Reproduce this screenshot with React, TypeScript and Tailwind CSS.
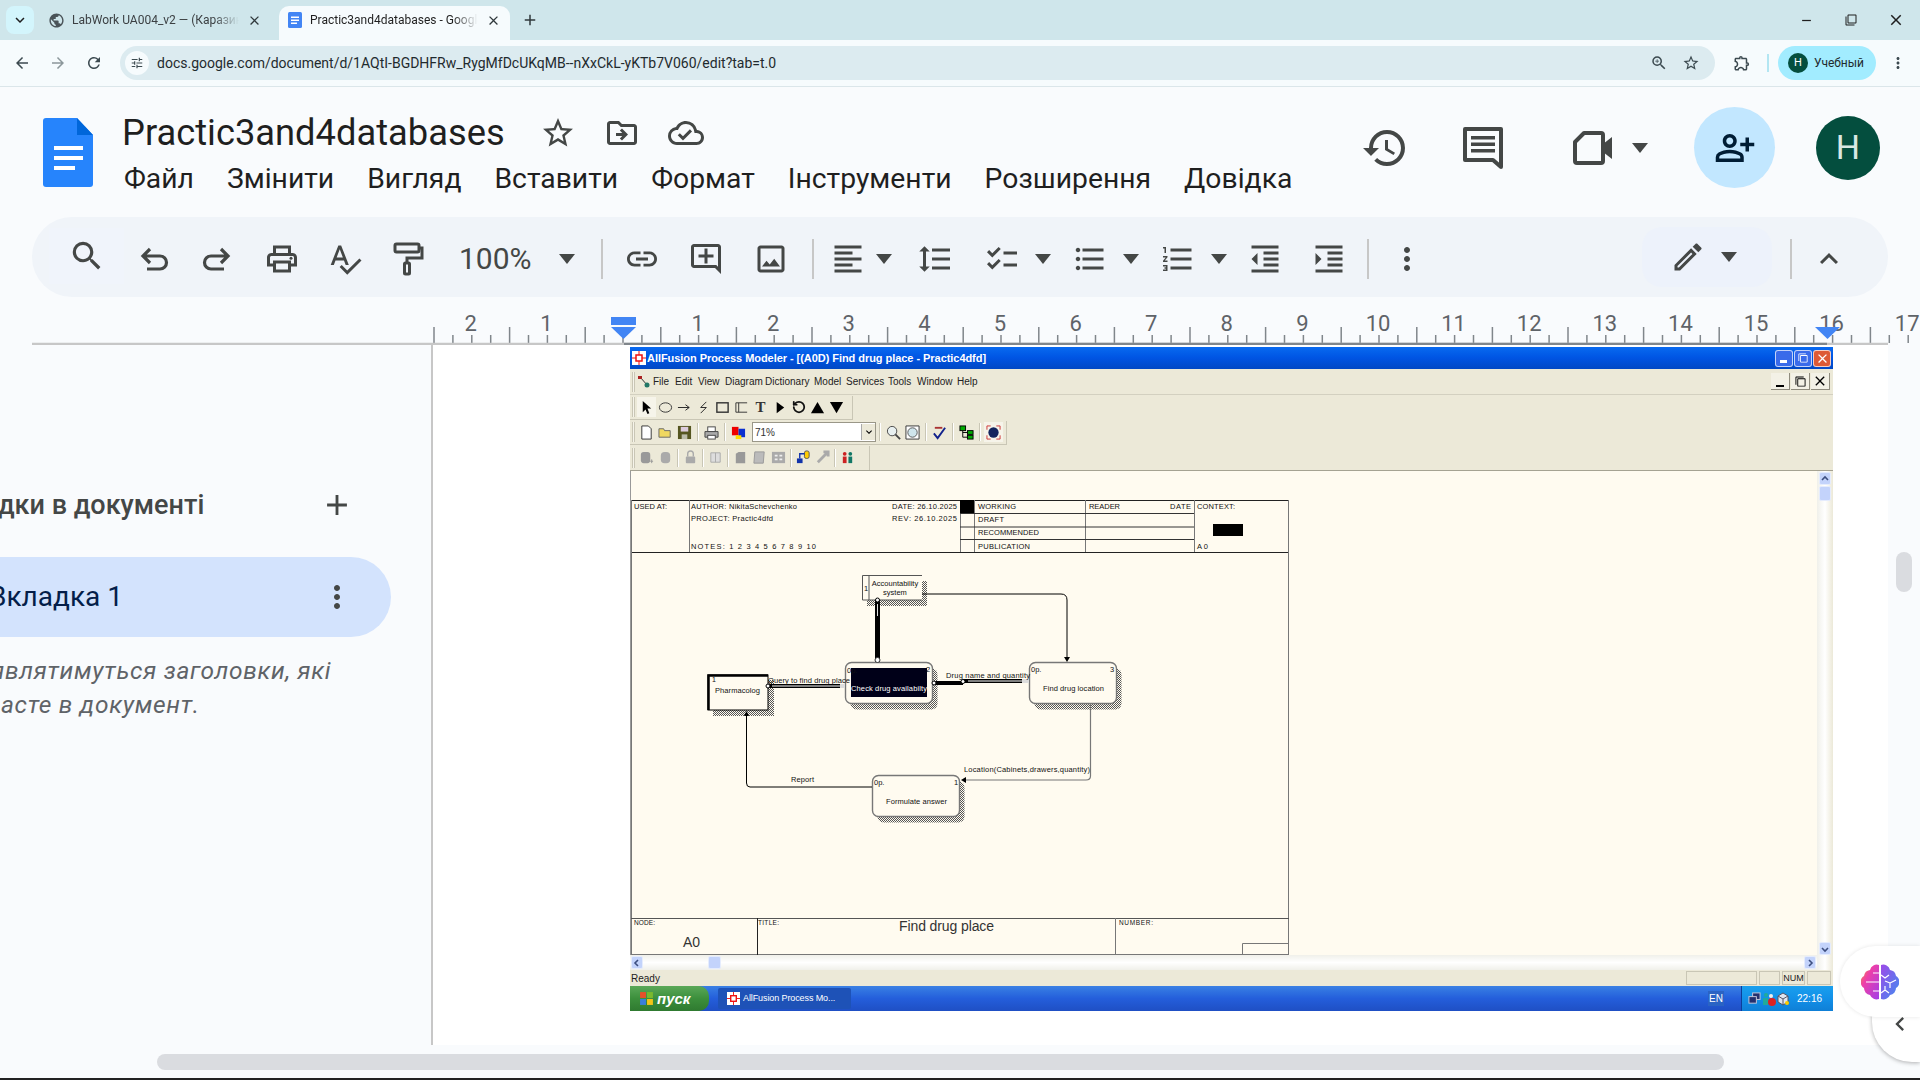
import React from "react";
import {
  MdSearch, MdOutlinePrint, MdSpellcheck, MdLink, MdOutlineAddComment, MdOutlineImage,
  MdFormatAlignLeft, MdFormatLineSpacing, MdChecklist, MdFormatListBulleted, MdFormatListNumbered, MdFormatIndentDecrease,
  MdFormatIndentIncrease, MdMoreVert, MdOutlineEdit, MdExpandLess, MdHistory, MdOutlinePersonAddAlt,
  MdStarBorder, MdOutlineDriveFileMove, MdOutlineCloudDone, MdArrowBack, MdArrowForward, MdRefresh, MdTune, MdZoomIn,
  MdOutlineExtension, MdClose, MdAdd, MdExpandMore, MdPublic, MdOutlineFilterNone, MdRemove, MdChevronLeft,
} from "react-icons/md";
import { RotateCcw } from "lucide-react";

const Caret = ({ className = "" }: { className?: string }) => (
  <svg viewBox="0 0 20 12" className={"w-5 h-3 shrink-0 " + className}><path d="M2 1h16l-8 10z" fill="#444746" /></svg>
);

const Ic = ({ className = "", children }: { className?: string; children: React.ReactNode }) => (
  <div className={"w-9 h-9 shrink-0 flex items-center justify-center text-[36px] text-[#444746] " + className}>{children}</div>
);

const Sep = ({ className = "" }: { className?: string }) => <div className={"w-[2px] h-10 shrink-0 bg-[#c7c7c7] " + className} />;

const UndoIcon = () => (
  <svg viewBox="0 0 36 36" className="w-9 h-9"><path d="M14 8 7 15l7 7M7 15h17a6.500 6.500 0 0 1 0 13H11" fill="none" stroke="#444746" strokeWidth="3.200" /></svg>
);
const RedoIcon = () => (
  <svg viewBox="0 0 36 36" className="w-9 h-9"><path d="M22 8l7 7-7 7M29 15H12a6.500 6.500 0 0 0 0 13h13" fill="none" stroke="#444746" strokeWidth="3.200" /></svg>
);
const RollerIcon = () => (
  <svg viewBox="0 0 36 36" className="w-9 h-9">
    <rect x="5" y="3" width="24" height="8" rx="1.500" fill="none" stroke="#444746" strokeWidth="3" />
    <path d="M29 7h3v10H17v5" fill="none" stroke="#444746" strokeWidth="3" />
    <rect x="14.500" y="22" width="5" height="11" rx="1" fill="none" stroke="#444746" strokeWidth="3" />
  </svg>
);

function DocsLogo() {
  return (
    <svg viewBox="0 0 50 69" className="w-[50px] h-[69px] shrink-0">
      <path d="M3 0h31l16 17v49a3 3 0 0 1-3 3H3a3 3 0 0 1-3-3V3a3 3 0 0 1 3-3z" fill="#2684fc" />
      <path d="M34 0l16 17H34z" fill="#0066da" />
      <path d="M11 28h29v4H11zM11 38h29v4H11zM11 48h21v4H11z" fill="#fff" />
    </svg>
  );
}

function DocsFav() {
  return (
    <svg viewBox="0 0 16 16" className="w-4 h-4 shrink-0">
      <rect x="1" y="0" width="14" height="16" rx="1.500" fill="#4285f4" />
      <path d="M4 4.500h8v1.600H4zM4 7.500h8v1.600H4zM4 10.500h6v1.600H4z" fill="#fff" />
    </svg>
  );
}

function TabStrip() {
  return (
    <div className="h-10 shrink-0 bg-[#cfe6eb] flex text-[12px] text-[#3c4043]">
      <div className="ml-[6px] mt-[6px] w-7 h-7 rounded-lg bg-[#d3f5fc] flex items-center justify-center text-[18px] text-[#1f1f1f]"><MdExpandMore /></div>
      <div className="w-[245px] flex items-center pl-[14px]">
        <MdPublic className="text-[17px] text-[#4a5358] shrink-0" />
        <span className="ml-[7px] w-[167px] overflow-hidden whitespace-nowrap [mask-image:linear-gradient(to_right,#000_85%,transparent)]">LabWork UA004_v2 — (Каразин Університет)</span>
        <MdClose className="ml-[8px] text-[15px] text-[#30393c] shrink-0" />
      </div>
      <div className="mt-[6px] w-[231px] h-[34px] rounded-t-[10px] bg-[#f6fbfd] flex items-center pl-[8px] pb-[6px] text-[#1f1f1f]">
        <DocsFav />
        <span className="ml-[7px] w-[168px] overflow-hidden whitespace-nowrap [mask-image:linear-gradient(to_right,#000_85%,transparent)]">Practic3and4databases - Google Docs</span>
        <MdClose className="ml-[8px] text-[15px] text-[#30393c] shrink-0" />
      </div>
      <div className="ml-[11px] flex items-center"><MdAdd className="text-[18px] text-[#30393c]" /></div>
      <div className="ml-auto flex items-center text-[#1f1f1f]">
        <MdRemove className="text-[15px]" />
        <MdOutlineFilterNone className="ml-[31px] text-[12px]" />
        <MdClose className="ml-[30px] mr-[15px] text-[18px]" />
      </div>
    </div>
  );
}

function AddressBar() {
  return (
    <div className="h-[47px] shrink-0 bg-[#f6fbfd] border-b border-[#dbe6ea] flex items-center text-[#3c4a50]">
      <MdArrowBack className="ml-[13px] text-[18px] shrink-0" />
      <MdArrowForward className="ml-[18px] text-[18px] text-[#8c979b] shrink-0" />
      <MdRefresh className="ml-[18px] text-[18px] shrink-0" />
      <div className="ml-[17px] w-[1595px] h-[34px] rounded-full bg-[#dcebf0] flex items-center shrink-0">
        <div className="ml-[5px] w-6 h-6 rounded-full bg-[#f6fbfd] flex items-center justify-center text-[14px]"><MdTune /></div>
        <span className="ml-[8px] text-[14px] text-[#1f2a2e] font-['Roboto',sans-serif] whitespace-nowrap">docs.google.com/document/d/1AQtI-BGDHFRw_RygMfDcUKqMB--nXxCkL-yKTb7V060/edit?tab=t.0</span>
        <MdZoomIn className="ml-auto text-[18px]" />
        <MdStarBorder className="ml-[14px] mr-[15px] text-[18px]" />
      </div>
      <MdOutlineExtension className="ml-[18px] text-[18px] shrink-0" />
      <div className="ml-[16px] w-[2px] h-[18px] bg-[#b3e6f2] shrink-0" />
      <div className="ml-[9px] w-[98px] h-[34px] rounded-full bg-[#a2ecff] flex items-center pl-[10px] shrink-0">
        <div className="w-5 h-5 rounded-full bg-[#044e3e] text-white text-[11px] flex items-center justify-center">H</div>
        <span className="ml-[6px] text-[12px] text-[#1f2a2e]">Учебный</span>
      </div>
      <MdMoreVert className="ml-[13px] text-[18px] shrink-0" />
    </div>
  );
}

function DocHeader() {
  return (
    <div className="h-[130px] shrink-0 flex items-start">
      <div className="ml-[43px] mt-[31px]"><DocsLogo /></div>
      <div className="ml-[29px] mt-[25px]">
        <div className="flex items-center h-[42px]">
          <div className="w-[385px] text-[36.300px] leading-[42px] text-[#1f1f1f] whitespace-nowrap">Practic3and4databases</div>
          <Ic className="ml-[33px]"><MdStarBorder /></Ic>
          <Ic className="ml-[28px]"><MdOutlineDriveFileMove /></Ic>
          <Ic className="ml-[28px]"><MdOutlineCloudDone /></Ic>
        </div>
        <div className="flex ml-[2px] mt-[6px] gap-[33px] text-[28.300px] leading-[38px] text-[#1f1f1f] whitespace-nowrap">
          <span>Файл</span><span>Змінити</span><span>Вигляд</span><span>Вставити</span><span>Формат</span><span>Інструменти</span><span>Розширення</span><span>Довідка</span>
        </div>
      </div>
      <div className="ml-auto mt-[20px] h-[81px] flex items-center pr-[40px]">
        <Ic className="w-12 h-12 text-[50px]"><MdHistory /></Ic>
        <svg viewBox="0 0 40 42" className="ml-[54px] w-[40px] h-[42px] shrink-0">
          <path d="M2 2h36v38l-8-7H2z" fill="none" stroke="#444746" strokeWidth="4" strokeLinejoin="round" />
          <path d="M8 9h24v3.500H8zM8 15.500h24V19H8zM8 22h24v3.500H8z" fill="#444746" />
        </svg>
        <svg viewBox="0 0 42 34" className="ml-[69px] w-[42px] h-[34px] shrink-0">
          <path d="M12 2h17a2 2 0 0 1 2 2v26a2 2 0 0 1-2 2H5a2 2 0 0 1-2-2V11z" fill="none" stroke="#444746" strokeWidth="4" strokeLinejoin="round" />
          <path d="M31 13l9-7v22l-9-7z" fill="#444746" />
        </svg>
        <Caret className="ml-[16px]" />
        <div className="ml-[44px] w-[81px] h-[81px] rounded-full bg-[#c2e7ff] flex items-center justify-center text-[42px] text-[#001d35] shrink-0"><MdOutlinePersonAddAlt /></div>
        <div className="ml-[41px] w-16 h-16 rounded-full bg-[#044e3e] text-[#d8e8e3] text-[34px] flex items-center justify-center shrink-0">H</div>
      </div>
    </div>
  );
}

function Toolbar() {
  return (
    <div className="h-20 shrink-0 ml-[32px] w-[1856px] rounded-full bg-[#f0f4f9] flex items-center pt-[3px]">
      <div className="ml-[17px] w-[75px] h-14 bg-[#f0f4fb] flex items-center justify-center text-[38px] text-[#444746] -mt-[6px]"><MdSearch /></div>
      <Ic className="ml-[12px]"><UndoIcon /></Ic>
      <Ic className="ml-[27px]"><RedoIcon /></Ic>
      <Ic className="ml-[29px]"><MdOutlinePrint /></Ic>
      <Ic className="ml-[27px]"><MdSpellcheck /></Ic>
      <Ic className="ml-[27px]"><RollerIcon /></Ic>
      <div className="ml-[33px] w-[73px] text-[30px] text-[#444746] whitespace-nowrap">100%</div>
      <Caret className="ml-[25px]" />
      <Sep className="ml-[24px]" />
      <Ic className="ml-[21px]"><MdLink /></Ic>
      <Ic className="ml-[28px]"><MdOutlineAddComment /></Ic>
      <Ic className="ml-[29px]"><MdOutlineImage /></Ic>
      <Sep className="ml-[23px]" />
      <Ic className="ml-[16px]"><MdFormatAlignLeft /></Ic>
      <Caret className="ml-[8px]" />
      <Ic className="ml-[23px]"><MdFormatLineSpacing /></Ic>
      <Ic className="ml-[31px]"><MdChecklist /></Ic>
      <Caret className="ml-[13px]" />
      <Ic className="ml-[19px]"><MdFormatListBulleted /></Ic>
      <Caret className="ml-[13px]" />
      <Ic className="ml-[19px]"><MdFormatListNumbered /></Ic>
      <Caret className="ml-[13px]" />
      <Ic className="ml-[18px]"><MdFormatIndentDecrease /></Ic>
      <Ic className="ml-[28px]"><MdFormatIndentIncrease /></Ic>
      <Sep className="ml-[20px]" />
      <Ic className="ml-[20px]"><MdMoreVert /></Ic>
      <div className="ml-[217px] w-[130px] h-[60px] rounded-[20px] bg-[#edf2fb] flex items-center shrink-0 -mt-[3px]">
        <Ic className="ml-[28px]"><MdOutlineEdit /></Ic>
        <Caret className="ml-[13px]" />
      </div>
      <Sep className="ml-[18px]" />
      <Ic className="ml-[19px]"><MdExpandLess /></Ic>
    </div>
  );
}

function Ruler() {
  const ticks = [];
  for (let i = -10; i <= 68; i++) {
    const x = 623 + i * 18.9;
    const half = ((i % 4) + 4) % 4 === 2;
    ticks.push(<path key={i} d={`M${x} ${half ? 327 : 335}V343`} stroke="#80868b" strokeWidth="1.500" />);
  }
  const nums = [-2, -1, 1, 2, 3, 4, 5, 6, 7, 8, 9, 10, 11, 12, 13, 14, 15, 16, 17];
  return (
    <svg viewBox="0 297 1920 48" className="w-[1920px] h-12 shrink-0 block">
      {ticks}
      {nums.map((n) => (
        <text key={n} x={622 + n * 75.6} y={331} textAnchor="middle" fontSize="22" fontFamily="Roboto, sans-serif" fill="#5f6368">{Math.abs(n)}</text>
      ))}
      <path d="M32 344H1888" stroke="#c7c7c7" strokeWidth="2.500" />
      <path d="M624 344H1827" stroke="#80868b" strokeWidth="2.500" />
      <rect x="611" y="317" width="25" height="8" fill="#4285f4" />
      <path d="M611 327h25l-12.500 12z" fill="#4285f4" />
      <path d="M1815 327h25l-12.500 12z" fill="#4285f4" />
    </svg>
  );
}

function Sidebar() {
  return (
    <div className="w-[433px] shrink-0 border-r-2 border-[#c7c7c7] overflow-hidden">
      <div className="mt-[140px] h-10 flex items-center">
        <span className="-ml-[64px] w-[385px] text-[27px] font-medium text-[#444746] whitespace-nowrap shrink-0">Вкладки в документі</span>
        <MdAdd className="text-[34px] text-[#444746] -ml-[1px] shrink-0" />
      </div>
      <div className="mt-[32px] w-[391px] h-20 rounded-r-full bg-[#d3e3fd] flex items-center">
        <span className="-ml-[11px] w-[330px] text-[28px] text-[#041e49] whitespace-nowrap shrink-0">Вкладка 1</span>
        <MdMoreVert className="text-[36px] text-[#444746] shrink-0" />
      </div>
      <div className="mt-[17px] text-[24.500px] leading-[34px] italic text-[#5f6368] whitespace-nowrap tracking-[0.7px]">
        <div className="-ml-[71px]">Тут з'являтимуться заголовки, які</div>
        <div className="-ml-[78px]">ви додасте в документ.</div>
      </div>
    </div>
  );
}

function Grip() {
  return <div className="ml-[2px] mr-[2px] w-[3px] h-[20px] border-x border-[#c9c6b5] bg-[#f6f4ea] shrink-0" />;
}

const XI = ({ children, className = "" }: { children: React.ReactNode; className?: string }) => (
  <div className={"w-[19px] h-[20px] shrink-0 flex items-center justify-center " + className}>
    <svg viewBox="0 0 16 16" className="w-[15px] h-[15px]">{children}</svg>
  </div>
);
const XSep = ({ className = "mx-[3px]" }: { className?: string }) => <div className={"w-[2px] h-[18px] border-x border-l-[#c9c6b5] border-r-white shrink-0 " + className} />;

function XpBtn({ kind, color }: { kind: string; color: string }) {
  return (
    <div className={"w-[18px] h-[17px] rounded-[3px] border border-white/70 flex items-center justify-center shrink-0 " + color}>
      {kind === "min" && <div className="w-[7px] h-[3px] bg-white mt-[7px] -ml-[2px]" />}
      {kind === "max" && <MdOutlineFilterNone className="text-white text-[10px] rotate-90" />}
      {kind === "x" && <MdClose className="text-white text-[15px]" />}
    </div>
  );
}

function MdiBtn({ children }: { children: React.ReactNode }) {
  return <div className="w-[19px] h-[17px] bg-[#f3f1e6] border-r border-b border-[#8f8c7e] flex items-center justify-center text-black shrink-0">{children}</div>;
}

function Sheet() {
  const t = (x: number, y: number, s: string, len?: number, size = 7.5, fill = "#111") => (
    <text x={x} y={y} fontSize={size} fontFamily="'Liberation Sans', sans-serif" fill={fill} textLength={len} lengthAdjust={len ? "spacing" : undefined}>{s}</text>
  );
  const box = (x: number, y: number, w: number, h: number, r: number, stroke = "#777", sw = 1.4) => (
    <>
      <rect x={x + 5} y={y + 6} width={w} height={h} rx={r} fill="url(#hatch)" />
      <rect x={x} y={y} width={w} height={h} rx={r} fill="#fffbf0" stroke={stroke} strokeWidth={sw} />
    </>
  );
  return (
    <svg viewBox="630 471 1187 484" className="w-full h-full block">
      <defs>
        <pattern id="hatch" width="2" height="2" patternUnits="userSpaceOnUse">
          <rect width="2" height="2" fill="#fffbf0" />
          <rect width="1" height="1" fill="#555" />
          <rect x="1" y="1" width="1" height="1" fill="#555" />
        </pattern>
      </defs>
      <rect x="630" y="470" width="1187" height="486" fill="#fffbf0" />
      <path d="M630.500 471V955" stroke="#999" />
      {/* frame */}
      <rect x="631.500" y="500.500" width="657" height="454" fill="none" stroke="#777" />
      <path d="M632 500.500H1288M632 552.500H1288" stroke="#222" />
      <path d="M689.500 500V552M974.500 500V552M1085.500 500V552M1194.500 500V552M960.500 500V552" stroke="#777" />
      <path d="M960 513.500H1194M960 527H1194M960 539.500H1194" stroke="#333" />
      <rect x="960" y="500" width="14" height="13" fill="#000" />
      <rect x="1213" y="524" width="30" height="12" fill="#000" />
      {t(634, 509, "USED AT:", 33)}
      {t(691, 509, "AUTHOR:  NikitaSchevchenko", 106)}
      {t(691, 521, "PROJECT:  Practic4dfd", 82)}
      {t(691, 549, "NOTES:  1  2  3  4  5  6  7  8  9  10", 125)}
      {t(892, 509, "DATE:  26.10.2025", 65)}
      {t(892, 521, "REV:   26.10.2025", 65)}
      {t(978, 509, "WORKING", 38)}
      {t(978, 522, "DRAFT", 26)}
      {t(978, 535, "RECOMMENDED", 61)}
      {t(978, 549, "PUBLICATION", 52)}
      {t(1089, 509, "READER", 31)}
      {t(1170, 509, "DATE", 21)}
      {t(1197, 509, "CONTEXT:", 38)}
      {t(1197, 549, "A0", 11)}
      {/* bottom table */}
      <path d="M631 918.500H1289" stroke="#555" />
      <path d="M757.500 918V955" stroke="#222" />
      <path d="M1115.500 918V955M1242.500 955V943.500H1289" stroke="#777" fill="none" />
      {t(634, 925, "NODE:", 21, 6.5)}
      {t(758, 925, "TITLE:", 21, 6.5)}
      {t(1119, 925, "NUMBER:", 34, 6.5)}
      <text x="899" y="931" fontSize="14" fontFamily="'Liberation Sans', sans-serif" fill="#333" textLength="95">Find drug place</text>
      <text x="683" y="947" fontSize="14" fontFamily="'Liberation Sans', sans-serif" fill="#333" textLength="17">A0</text>
      {/* store */}
      <rect x="867" y="581" width="60" height="25" fill="url(#hatch)" />
      <rect x="862" y="575" width="60" height="25" fill="#fffbf0" />
      <path d="M922 575.500H862.500V600H922M869 575V600" stroke="#555" fill="none" />
      {t(864, 591, "1", undefined, 7.500)}
      <text x="895" y="586" textAnchor="middle" fontSize="7.500" fontFamily="'Liberation Sans', sans-serif" fill="#111">Accountability</text>
      <text x="895" y="595" textAnchor="middle" fontSize="7.500" fontFamily="'Liberation Sans', sans-serif" fill="#111">system</text>
      {/* pharmacolog */}
      <rect x="713" y="680" width="61" height="36" fill="url(#hatch)" />
      <rect x="708" y="675" width="60" height="35" fill="#fffbf0" stroke="#000" strokeWidth="1" />
      <path d="M708.500 710V675.500H768" stroke="#000" strokeWidth="2.500" fill="none" />
      {t(712, 682, "1", undefined, 7)}
      {t(715, 693, "Pharmacolog", 45)}
      {/* processes */}
      {box(845.500, 662.500, 87, 41, 6)}
      <rect x="851" y="668" width="76" height="29" fill="#000018" />
      {t(847, 673, "0p.", undefined, 7.500)}
      {t(926, 672, "2", undefined, 7.500)}
      {t(851, 691, "Check drug availabilty", 76, 7.500, "#fff")}
      {box(1029.500, 662.500, 87, 41, 6)}
      {t(1031, 672, "0p.", undefined, 7.500)}
      {t(1110, 672, "3", undefined, 7.500)}
      {t(1043, 691, "Find drug location", 61)}
      {box(872.500, 775.500, 87, 41, 6)}
      {t(874, 785, "0p.", undefined, 7.500)}
      {t(954, 785, "1", undefined, 7.500)}
      {t(886, 804, "Formulate answer", 61)}
      {/* arrows */}
      <path d="M877.500 600V660" stroke="#000" strokeWidth="5" />
      <path d="M877.500 604V616" stroke="#ddd" strokeWidth="1" />
      <circle cx="877.500" cy="600" r="2" fill="#fff" stroke="#000" />
      <circle cx="877.500" cy="660" r="2.500" fill="#fff" stroke="#333" />
      <path d="M922 594H1061Q1067 594 1067 600V657" stroke="#000" strokeWidth="1" fill="none" />
      <path d="M1064 657h6l-3 5z" fill="#000" />
      <path d="M768 686H845" stroke="#000" strokeWidth="4" />
      <path d="M772 686H845" stroke="#fff" strokeWidth="1" />
      <circle cx="768" cy="686" r="2" fill="#fff" stroke="#000" />
      <path d="M840 686H845" stroke="#ddd" strokeWidth="4" />
      {t(768, 683, "Query to find drug place", 82, 7.500)}
      <path d="M933 683H963" stroke="#000" strokeWidth="4" />
      <path d="M963 681H1029" stroke="#000" strokeWidth="4" />
      <path d="M968 681H1022" stroke="#fff" strokeWidth="1" />
      <circle cx="963" cy="681.500" r="2" fill="#fff" stroke="#000" />
      <circle cx="934" cy="683" r="2" fill="#fff" stroke="#000" />
      <path d="M1022 681H1029" stroke="#ddd" strokeWidth="4" />
      {t(946, 678, "Drug name and quantity", 84, 7.500)}
      <path d="M1090.500 703V776Q1090.500 780 1086 780H965" stroke="#777" strokeWidth="1.200" fill="none" />
      <path d="M966 777v6l-5-3z" fill="#000" />
      {t(964, 772, "Location(Cabinets,drawers,quantity)", 126, 7.500)}
      <path d="M872 787H750Q746.500 787 746.500 783V715" stroke="#000" strokeWidth="1" fill="none" />
      <path d="M744 716h5l-2.500-5z" fill="#000" />
      {t(791, 782, "Report", 23, 7.500)}
    </svg>
  );
}

function Scroll({ dir, className = "" }: { dir: string; className?: string }) {
  return (
    <div className={"w-[12px] h-[13px] rounded-[2px] bg-[#c3d3fb] border border-[#e5ecfd] shrink-0 flex items-center justify-center " + className}>
      <svg viewBox="0 0 8 8" className="w-2 h-2">
        <path d={dir === "up" ? "M1 5l3-3 3 3" : dir === "down" ? "M1 3l3 3 3-3" : dir === "left" ? "M5 1L2 4l3 3" : "M3 1l3 3-3 3"} fill="none" stroke="#3d4f80" strokeWidth="1.600" />
      </svg>
    </div>
  );
}

function XpWindow() {
  return (
    <div className="ml-[197px] mt-[2px] w-[1203px] h-[664px] flex flex-col bg-[#ece9d8] font-['Liberation_Sans',sans-serif]">
      <div className="h-[22px] shrink-0 bg-linear-to-b from-[#0a6af0] via-[#0054e3] to-[#0148c4] flex items-center">
        <svg viewBox="0 0 14 14" className="ml-[2px] w-[14px] h-[14px] bg-white shrink-0">
          <rect x="4" y="4" width="6" height="6" fill="none" stroke="#e11" strokeWidth="1.500" />
          <path d="M0 7h4M10 7h4M7 0v4M7 10v4" stroke="#e11" />
        </svg>
        <span className="ml-[1px] text-[11px] font-bold text-white whitespace-nowrap tracking-[-0.05px]">AllFusion Process Modeler - [(A0D) Find drug place - Practic4dfd]</span>
        <div className="ml-auto flex gap-[1px] pr-[2px]">
          <XpBtn kind="min" color="bg-[#3a6bea]" />
          <XpBtn kind="max" color="bg-[#3a6bea]" />
          <XpBtn kind="x" color="bg-[#dd5a36]" />
        </div>
      </div>
      <div className="h-[26px] shrink-0 flex items-center border-b border-[#d3d0c0] text-[10px] text-[#222]">
        <Grip />
        <svg viewBox="0 0 14 14" className="w-[14px] h-[14px] shrink-0"><path d="M3 2l8 9" stroke="#333" /><rect x="1" y="1" width="4" height="3" fill="#a22" /><circle cx="10" cy="10" r="2.500" fill="#276" /></svg>
        <div className="flex ml-[2px] whitespace-nowrap">
          <span className="w-[22px]">File</span><span className="w-[23px]">Edit</span><span className="w-[27px]">View</span><span className="w-[40px]">Diagram</span><span className="w-[49px]">Dictionary</span><span className="w-[32px]">Model</span><span className="w-[42px]">Services</span><span className="w-[29px]">Tools</span><span className="w-[40px]">Window</span><span>Help</span>
        </div>
        <div className="ml-auto flex gap-[1px] pr-[3px]">
          <MdiBtn><div className="w-2 h-[2px] bg-black mt-[9px]" /></MdiBtn>
          <MdiBtn><MdOutlineFilterNone className="text-[11px] rotate-90" /></MdiBtn>
          <MdiBtn><MdClose className="text-[16px]" /></MdiBtn>
        </div>
      </div>
      <div className="h-[25px] shrink-0 flex items-center">
        <div className="w-[223px] h-[24px] flex items-center border-r border-b border-[#c9c6b5]">
          <Grip />
          <XI className="bg-[#f6f4ea]"><path d="M4 1v12l3-3 2 5 2-1-2-5h4z" fill="#000" /></XI>
          <XI><ellipse cx="8" cy="8" rx="6.500" ry="5" fill="none" stroke="#333" /></XI>
          <XI><path d="M1 8h12M9 5l4 3-4 3" stroke="#222" fill="none" /></XI>
          <XI><path d="M11 2 5 8h6l-6 6" stroke="#222" fill="none" /></XI>
          <XI><rect x="2" y="3" width="12" height="10" fill="none" stroke="#333" strokeWidth="1.500" /></XI>
          <XI><path d="M14 3H2v10h12M5 3v10" stroke="#333" fill="none" /></XI>
          <div className="w-[19px] text-center font-['Liberation_Serif',serif] font-bold text-[15px] text-[#333] shrink-0">T</div>
          <XI><path d="M5 2l8 6-8 6z" fill="#000" /></XI>
          <div className="w-[19px] flex justify-center shrink-0"><RotateCcw size={14} strokeWidth={3} color="#111" /></div>
          <XI><path d="M8 2l7 12H1z" fill="#000" /></XI>
          <XI><path d="M8 14l7-12H1z" fill="#000" /></XI>
        </div>
      </div>
      <div className="h-[25px] shrink-0 flex items-center">
        <div className="w-[377px] h-[24px] flex items-center border-r border-b border-[#c9c6b5]">
          <Grip />
          <XI><path d="M3 1h7l3 3v11H3z" fill="#fff" stroke="#333" /></XI>
          <XI><path d="M1 13V4h5l1 2h6v7z" fill="#f0d860" stroke="#666" /></XI>
          <XI><path d="M1 1h14v14H1z" fill="#555520" /><rect x="4" y="2" width="8" height="5" fill="#dcd" /><rect x="5" y="10" width="6" height="5" fill="#bba" /></XI>
          <XSep />
          <XI><path d="M1 7h14v6H1z" fill="#aaa" stroke="#444" /><rect x="4" y="2" width="8" height="5" fill="#fff" stroke="#444" /><rect x="4" y="11" width="8" height="4" fill="#fff" stroke="#444" /></XI>
          <XSep />
          <XI><rect x="1" y="2" width="7" height="9" fill="#e00" /><rect x="8" y="4" width="7" height="9" fill="#0a2fd0" /><rect x="5" y="11" width="6" height="4" fill="#fd0" /></XI>
          <div className="ml-[4px] w-[124px] h-[20px] bg-white border border-[#9a9788] flex items-center shrink-0">
            <span className="ml-[2px] text-[10px] text-[#333]">71%</span>
            <div className="ml-auto w-[14px] h-[16px] bg-[#ece9d8] border-l border-[#aaa] flex items-center justify-center"><MdExpandMore className="text-[12px]" /></div>
          </div>
          <XSep />
          <XI><circle cx="6.500" cy="6.500" r="5" fill="#e8f0f0" stroke="#444" /><path d="M10 10l5 5" stroke="#444" strokeWidth="2" /></XI>
          <XI><path d="M1 1h14v14H1z" fill="#fff" stroke="#333" /><circle cx="8" cy="8" r="5" fill="#cfe5ec" stroke="#555" /></XI>
          <XSep />
          <XI><path d="M2 9l4 5 8-11" stroke="#12228c" strokeWidth="2" fill="none" /><path d="M3 3h8" stroke="#a33" strokeWidth="2" /></XI>
          <XSep />
          <XI><rect x="1" y="1" width="6" height="5" fill="#0a0" stroke="#000" /><rect x="9" y="6" width="6" height="4" fill="#0a0" stroke="#000" /><rect x="9" y="11" width="6" height="4" fill="#0a0" stroke="#000" /><path d="M4 6v7h5M4 8h5" stroke="#000" fill="none" /></XI>
          <XSep />
          <XI className="bg-[#f6f4ea]"><circle cx="8" cy="8" r="5.500" fill="#14245e" /><path d="M1 5V1h4M11 1h4v4M15 11v4h-4M5 15H1v-4" stroke="#c33" fill="none" /></XI>
        </div>
      </div>
      <div className="h-[25px] shrink-0 flex items-center">
        <div className="w-[240px] h-[24px] flex items-center border-r border-[#c9c6b5]">
          <Grip />
          <XI><rect x="2" y="2" width="10" height="12" rx="3" fill="#999" /><path d="M12 12h3M13.500 10v4" stroke="#999" /></XI>
          <XI><rect x="3" y="2" width="10" height="12" rx="4" fill="#aaa" /></XI>
          <XSep className="mx-[2px]" />
          <XI><rect x="3" y="7" width="10" height="7" rx="1" fill="#aaa" /><path d="M5 7V4a3 3 0 0 1 6 0v3" stroke="#aaa" fill="none" strokeWidth="1.500" /></XI>
          <XSep className="mx-[2px]" />
          <XI><path d="M3 3h10v10H3z" fill="#ddd" stroke="#aaa" /><path d="M8 3v10" stroke="#aaa" /></XI>
          <XSep className="mx-[2px]" />
          <XI><path d="M3 14V4l3-2h7v12z" fill="#999" /></XI>
          <XI><path d="M3 2h10l-1 12H2z" fill="#bbb" stroke="#999" /></XI>
          <XI><rect x="1" y="2" width="14" height="12" fill="#aaa" /><path d="M4 5h3v2H4zM9 5h3v2H9zM4 9h3v2H4zM9 9h3v2H9z" fill="#eee" /></XI>
          <XSep className="mx-[2px]" />
          <XI><rect x="1" y="9" width="6" height="5" fill="#13a" /><rect x="9" y="1" width="5" height="8" rx="2" fill="#fc0" stroke="#555" /><path d="M4 9V4h5" stroke="#13a" fill="none" strokeWidth="1.500" /></XI>
          <XI><path d="M3 13 13 3M9 2h5v5" stroke="#aaa" strokeWidth="3" fill="none" /></XI>
          <XSep className="mx-[2px]" />
          <XI><circle cx="5" cy="4" r="2" fill="#c22" /><circle cx="11" cy="4" r="2" fill="#176" /><path d="M3 7h4v7H3z" fill="#c22" /><path d="M9 7h4v7H9z" fill="#176" /></XI>
        </div>
      </div>
      <div className="flex-1 min-h-0 flex border-t border-[#a5a292]">
        <div className="flex-1 flex flex-col min-w-0">
          <div className="flex-1 min-h-0 overflow-hidden"><Sheet /></div>
          <div className="h-[15px] shrink-0 bg-linear-to-b from-[#f0f0ea] via-white to-[#f0f0ea] flex items-center pl-[1px]">
            <Scroll dir="left" />
            <div className="ml-[65px] w-[13px] h-[13px] rounded-[2px] bg-[#c3d3fb] border border-[#e5ecfd]" />
            <Scroll dir="right" className="ml-auto mr-[1px]" />
          </div>
        </div>
        <div className="w-[16px] shrink-0 bg-linear-to-r from-[#f0f0ea] via-white to-[#ece9d8] flex flex-col items-center pt-[1px] pb-[15px]">
          <Scroll dir="up" />
          <div className="mt-[1px] w-[12px] h-[15px] rounded-[2px] bg-[#c3d3fb] border border-[#e5ecfd]" />
          <Scroll dir="down" className="mt-auto" />
        </div>
      </div>
      <div className="h-[16px] shrink-0 flex items-center text-[10px] text-[#222]">
        <span className="ml-[1px]">Ready</span>
        <div className="ml-auto flex gap-[2px] pr-[2px] h-[14px]">
          <div className="w-[71px] border border-[#c9c6b5]" />
          <div className="w-[21px] border border-[#c9c6b5]" />
          <div className="w-[23px] border border-[#c9c6b5] text-center leading-[13px] text-[9px]">NUM</div>
          <div className="w-[24px] border border-[#c9c6b5]" />
        </div>
      </div>
      <div className="h-[25px] shrink-0 bg-linear-to-b from-[#3a80e4] via-[#245edb] to-[#1f4fc4] flex items-center text-white">
        <div className="w-[79px] h-full rounded-r-[10px] bg-linear-to-b from-[#5aa858] via-[#3c8f3c] to-[#2f7a30] flex items-center pl-[9px]">
          <svg viewBox="0 0 14 14" className="w-[15px] h-[15px] shrink-0">
            <rect x="1" y="1" width="5.500" height="5.500" fill="#e8502a" /><rect x="7.500" y="1" width="5.500" height="5.500" fill="#7ab92e" />
            <rect x="1" y="7.500" width="5.500" height="5.500" fill="#3a7fdc" /><rect x="7.500" y="7.500" width="5.500" height="5.500" fill="#f5c518" />
          </svg>
          <span className="ml-[3px] text-[15px] font-bold italic leading-none">пуск</span>
        </div>
        <div className="ml-[9px] w-[133px] h-[21px] rounded-[2px] bg-[#1e52b7] flex items-center pl-[9px]">
          <svg viewBox="0 0 14 14" className="w-[13px] h-[13px] bg-white shrink-0">
            <rect x="4" y="4" width="6" height="6" fill="none" stroke="#e11" strokeWidth="1.500" />
            <path d="M0 7h4M10 7h4M7 0v4M7 10v4" stroke="#e11" />
          </svg>
          <span className="ml-[3px] text-[9px] whitespace-nowrap tracking-[-0.1px]">AllFusion Process Mo...</span>
        </div>
        <span className="ml-auto mr-[17px] text-[10px] px-[1px] bg-[#2a63c4]">EN</span>
        <div className="w-[92px] h-full bg-linear-to-b from-[#1a9fee] via-[#1290e8] to-[#0f7fd6] border-l border-[#0c3f9a] flex items-center pl-[6px]">
          <svg viewBox="0 0 14 14" className="w-[13px] h-[13px] shrink-0"><rect x="5" y="1" width="8" height="7" fill="#24306e" stroke="#ccd" /><rect x="1" y="5" width="8" height="7" fill="#24306e" stroke="#ccd" /></svg>
          <svg viewBox="0 0 14 14" className="ml-[1px] w-[14px] h-[14px] shrink-0"><circle cx="4" cy="3" r="2" fill="#2a9" /><circle cx="9" cy="4" r="2" fill="#eee" /><circle cx="10" cy="10" r="4" fill="#d22" /><rect x="1" y="6" width="5" height="7" fill="#2a9" /></svg>
          <svg viewBox="0 0 14 14" className="ml-[0px] w-[14px] h-[14px] shrink-0"><path d="M7 1l5 3v6l-5 3-5-3V4z" fill="#dfe4ef" stroke="#556" /><path d="M7 7V13M2 4l5 3 5-3" stroke="#556" fill="none" /><circle cx="11" cy="11" r="2" fill="#fc0" /></svg>
          <span className="ml-[7px] text-[10px]">22:16</span>
        </div>
      </div>
    </div>
  );
}

function Brain() {
  return (
    <svg viewBox="0 0 38 38" className="w-[38px] h-[38px]">
      <defs>
        <linearGradient id="bl" x1="0" y1="0" x2="1" y2="1"><stop offset="0" stopColor="#f59a2c" /><stop offset="0.35" stopColor="#ee3fa8" /><stop offset="1" stopColor="#a23fe8" /></linearGradient>
        <linearGradient id="br" x1="0" y1="0" x2="1" y2="1"><stop offset="0" stopColor="#9d4be8" /><stop offset="1" stopColor="#3f8df0" /></linearGradient>
      </defs>
      <path d="M18 2a7 7 0 0 0-9 5 7 7 0 0 0-6 6 7 7 0 0 0 0 12 7 7 0 0 0 6 7 7 7 0 0 0 9 4z" fill="url(#bl)" />
      <path d="M20 2a7 7 0 0 1 9 5 7 7 0 0 1 6 6 7 7 0 0 1 0 12 7 7 0 0 1-6 7 7 7 0 0 1-9 4z" fill="url(#br)" />
      <path d="M18 10h-6M18 19H5M18 28h-6M28 12l-4 3-4-3M24 15v0M35 17l-6 3v5M29 20l-5-2M28 30l-4-3-4 3M24 27v-4" stroke="#fff" strokeWidth="1.200" fill="none" />
    </svg>
  );
}

export default function App() {
  return (
    <div className="relative w-[1920px] h-[1080px] overflow-hidden bg-[#f9fbfd] flex flex-col font-['Roboto',sans-serif]">
      <TabStrip />
      <AddressBar />
      <DocHeader />
      <Toolbar />
      <Ruler />
      <div className="h-[700px] shrink-0 flex">
        <Sidebar />
        <div className="w-[1455px] shrink-0 bg-white overflow-hidden"><XpWindow /></div>
      </div>
      <div className="h-[33px] shrink-0 flex items-center">
        <div className="ml-[157px] w-[1567px] h-4 rounded-full bg-[#dadce0]" />
      </div>
      <div className="h-[2px] shrink-0 bg-[#222]" />
      <div className="absolute left-[1896px] top-[552px] w-4 h-10 rounded-full bg-[#dadce0]" />
      <div className="absolute left-[1872px] top-[990px] w-[48px] h-[72px] rounded-bl-[40px] bg-white shadow-[0_1px_4px_rgba(0,0,0,0.3)] flex items-end justify-start pb-[24px] pl-[14px] text-[#444746]">
        <MdChevronLeft className="text-[28px]" />
      </div>
      <div className="absolute left-[1840px] top-[946px] w-[80px] h-[71px] rounded-l-[36px] bg-white shadow-[0_0_4px_rgba(0,0,0,0.1)] flex items-center pl-[21px]"><Brain /></div>
    </div>
  );
}
